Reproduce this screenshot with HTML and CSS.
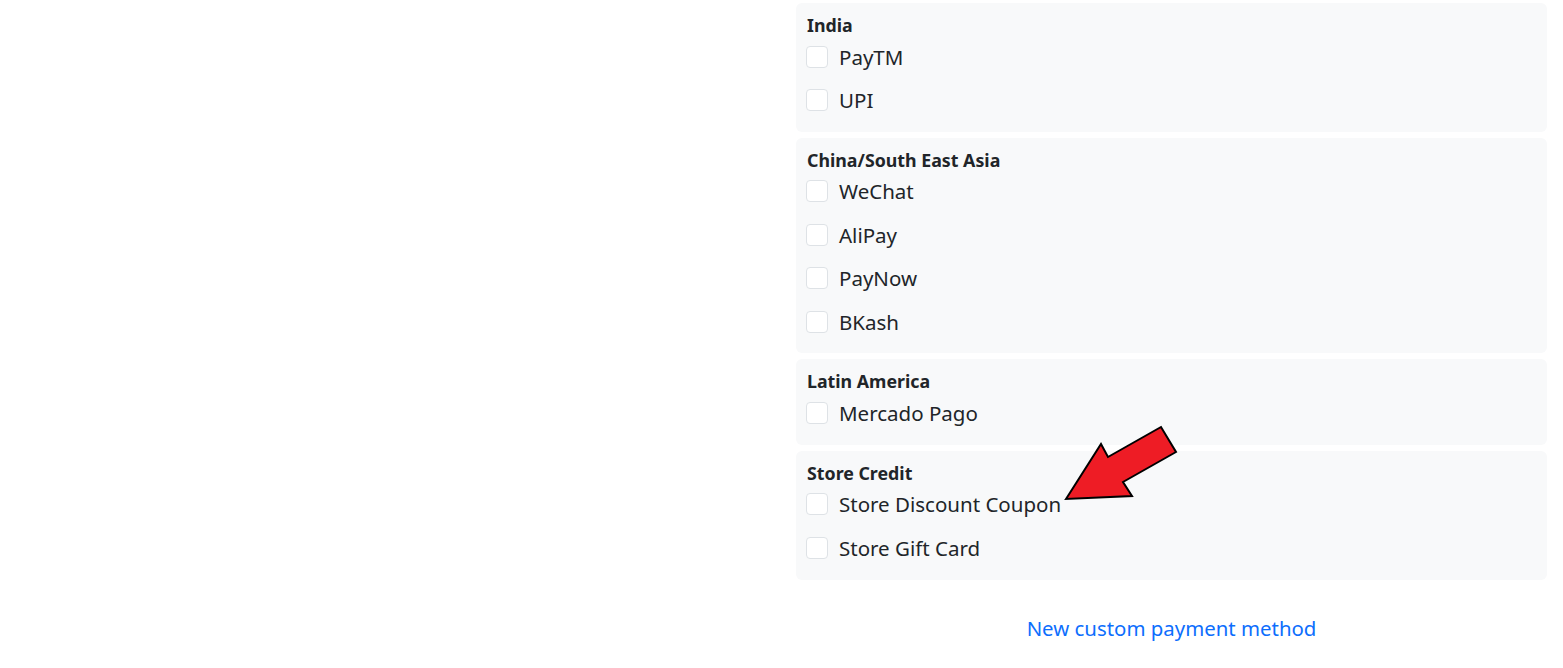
FILE: index.html
```html
<!DOCTYPE html>
<html>
<head>
<meta charset="utf-8">
<link rel="stylesheet" href="styles.css">
</head>
<body>
<div class="page">
  <div class="spacer"></div>
  <div class="column">
    <div class="group">
      <div class="group-title">India</div>
      <label class="option"><span class="box"></span><span>PayTM</span></label>
      <label class="option"><span class="box"></span><span>UPI</span></label>
    </div>
    <div class="group">
      <div class="group-title">China/South East Asia</div>
      <label class="option"><span class="box"></span><span>WeChat</span></label>
      <label class="option"><span class="box"></span><span>AliPay</span></label>
      <label class="option"><span class="box"></span><span>PayNow</span></label>
      <label class="option"><span class="box"></span><span>BKash</span></label>
    </div>
    <div class="group">
      <div class="group-title">Latin America</div>
      <label class="option"><span class="box"></span><span>Mercado Pago</span></label>
    </div>
    <div class="group">
      <div class="group-title">Store Credit</div>
      <label class="option"><span class="box"></span><span>Store Discount Coupon</span></label>
      <label class="option"><span class="box"></span><span>Store Gift Card</span></label>
    </div>
    <div class="link-row"><a class="new-link" href="#">New custom payment method</a></div>
    <svg class="arrow" width="130" height="90" viewBox="1055 420 130 90">
      <polygon points="1066,499 1101,444 1108,457 1161,427 1176,452 1123,482 1132,496" fill="#ee1c25" stroke="#000" stroke-width="2" stroke-linejoin="miter"/>
    </svg>
  </div>
</div>
</body>
</html>
```
FILE: styles.css
```css
html, body {
  margin: 0;
  padding: 0;
  background: #fff;
}
body {
  font-family: "Noto Sans", "Segoe UI", sans-serif;
  color: #212529;
}
.page {
  display: flex;
  padding: 3px 16px 0 0;
}
.spacer {
  flex: 1;
}
.column {
  width: 751px;
  position: relative;
  display: flex;
  flex-direction: column;
  gap: 6px;
}
.group {
  background: #f8f9fa;
  border-radius: 6px;
  padding: 13px 10px 10px 10px;
  display: flex;
  flex-direction: column;
}
.group-title {
  font-weight: 700;
  font-size: 17.8px;
  line-height: 19px;
  padding-left: 1px;
}
.option {
  display: flex;
  align-items: center;
  gap: 11px;
  height: 43.4px;
  font-size: 20.5px;
}
.box {
  width: 20px;
  height: 20px;
  border: 1px solid #dee2e6;
  border-radius: 4px;
  background: #fff;
  flex-shrink: 0;
}
.link-row {
  display: flex;
  justify-content: center;
  margin-top: 27px;
}
.new-link {
  color: #0d6efd;
  text-decoration: none;
  font-size: 20.4px;
  line-height: 30px;
}
.arrow {
  position: absolute;
  left: 259px;
  top: 417px;
}
```
